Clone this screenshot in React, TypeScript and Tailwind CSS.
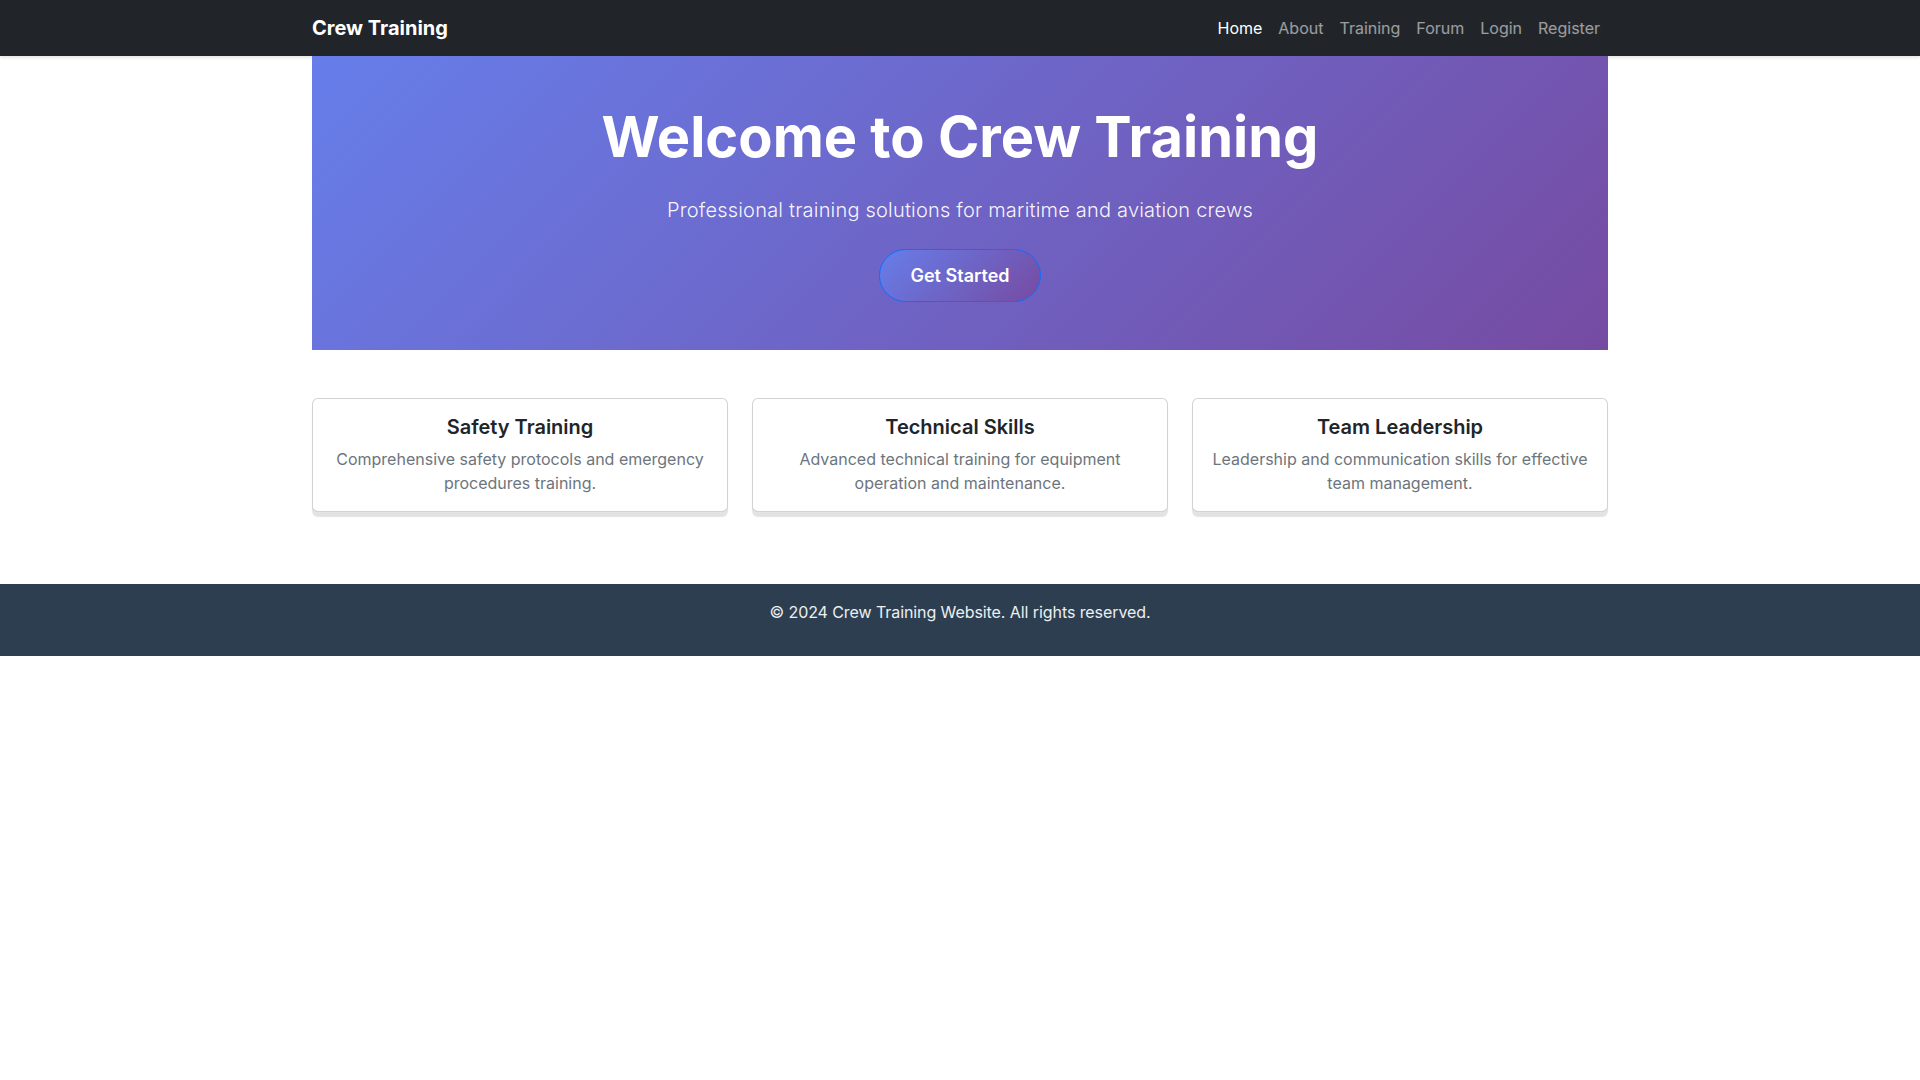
import React from "react";

const links = ["Home", "About", "Training", "Forum", "Login", "Register"];

const cards = [
  {
    title: "Safety Training",
    text: "Comprehensive safety protocols and emergency procedures training.",
  },
  {
    title: "Technical Skills",
    text: "Advanced technical training for equipment operation and maintenance.",
  },
  {
    title: "Team Leadership",
    text: "Leadership and communication skills for effective team management.",
  },
];

export default function App() {
  return (
    <div className="min-h-screen bg-white font-['Inter',sans-serif] text-[#212529]">
      <nav className="bg-[#212529] shadow-[0_2px_3px_rgba(0,0,0,0.1)]">
        <div className="mx-auto flex h-14 max-w-[1320px] items-center justify-between px-3">
          <a href="#" className="text-xl font-bold leading-[30px] text-white">
            Crew Training
          </a>
          <ul className="flex items-center">
            {links.map((l, i) => (
              <li key={l}>
                <a
                  href="#"
                  className={
                    i === 0
                      ? "block px-2 py-2 text-base leading-6 text-white"
                      : "block px-2 py-2 text-base leading-6 text-white/55"
                  }
                >
                  {l}
                </a>
              </li>
            ))}
          </ul>
        </div>
      </nav>

      <div className="mx-auto max-w-[1320px] px-3">
        <section className="bg-[linear-gradient(135deg,#667eea_0%,#764ba2_100%)] py-12 text-center text-white">
          <h1 className="mb-6 text-[56px] font-bold leading-[1.2]">
            Welcome to Crew Training
          </h1>
          <p className="mb-6 text-xl font-light leading-[1.5] tracking-[0.01em] text-white/95">
            Professional training solutions for maritime and aviation crews
          </p>
          <a
            href="#"
            className="inline-block rounded-full border border-[#0d6efd] bg-[linear-gradient(135deg,#667eea_0%,#764ba2_100%)] px-[30px] py-3 text-lg font-semibold leading-[1.5] text-white"
          >
            Get Started
          </a>
        </section>

        <div className="mb-[72px] mt-12 grid grid-cols-3 gap-6">
          {cards.map((c) => (
            <div
              key={c.title}
              className="rounded-md border border-black/[0.175] bg-white p-4 text-center shadow-[0_5px_1px_rgba(0,0,0,0.11)]"
            >
              <h5 className="mb-2 text-xl font-semibold leading-[1.2] text-[#212529]">
                {c.title}
              </h5>
              <p className="text-base leading-6 text-[#6c757d]">{c.text}</p>
            </div>
          ))}
        </div>
      </div>

      <footer className="bg-[#2c3e50] pb-8 pt-4 text-center text-[#ecf0f1]">
        <p className="text-base leading-6 tracking-[-0.005em]">
          © 2024 Crew Training Website. All rights reserved.
        </p>
      </footer>
    </div>
  );
}
